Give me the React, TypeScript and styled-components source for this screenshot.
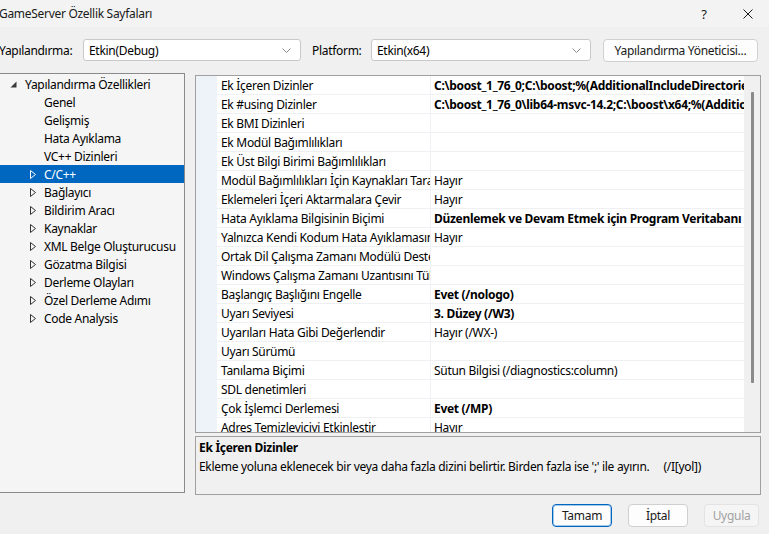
import React from "react";
import styled, { createGlobalStyle } from "styled-components";

const Global = createGlobalStyle`
  html, body { margin: 0; padding: 0; background: #f0f0f0; }
  * { box-sizing: border-box; }
`;

const FONT = `"Noto Sans", "Open Sans", sans-serif`;

const Window = styled.div`
  width: 769px;
  height: 534px;
  background: #f0f0f0;
  display: flex;
  flex-direction: column;
  overflow: hidden;
  font-family: ${FONT};
  font-size: 12px;
  letter-spacing: -0.3px;
  color: #000;
`;

const TitleBar = styled.div`
  height: 27px;
  flex: none;
  background: #f3f3f3;
  display: flex;
  align-items: center;
`;

const TitleText = styled.div`
  flex: 1;
  font-size: 12px;
  margin-left: -1px;
  color: #1a1a1a;
`;

const CaptionButton = styled.div<{ $w: number }>`
  width: ${(p) => p.$w}px;
  height: 27px;
  display: flex;
  align-items: center;
  justify-content: center;
  color: #1a1a1a;
  font-size: 13px;
`;

const ConfigRow = styled.div`
  display: flex;
  align-items: center;
  height: 22px;
  margin-top: 12px;
  margin-bottom: 12px;
`;

const Label = styled.div<{ $w: number; $ml: number }>`
  width: ${(p) => p.$w}px;
  margin-left: ${(p) => p.$ml}px;
  flex: none;
  white-space: nowrap;
`;

const Combo = styled.div<{ $w: number }>`
  width: ${(p) => p.$w}px;
  height: 22px;
  flex: none;
  background: #fff;
  border: 1px solid #c9c9c9;
  border-radius: 3px;
  display: flex;
  align-items: center;
  padding: 0 9px 0 5px;
`;

const ComboText = styled.div`
  flex: 1;
`;

const PushButton = styled.button<{ $w: number; $ml: number; $default?: boolean; $disabled?: boolean }>`
  width: ${(p) => p.$w}px;
  margin-left: ${(p) => p.$ml}px;
  height: 23px;
  flex: none;
  font-family: ${FONT};
  font-size: 12px;
  letter-spacing: -0.3px;
  padding: 0;
  border-radius: 4px;
  background: ${(p) => (p.$disabled ? "#f5f5f5" : "#fdfdfd")};
  color: ${(p) => (p.$disabled ? "#a2a2a2" : "#1a1a1a")};
  border: 1px solid ${(p) => (p.$default ? "#0067c0" : p.$disabled ? "#e3e3e3" : "#d0d0d0")};
  box-shadow: ${(p) => (p.$default ? "inset 0 0 0 1px rgba(0,103,192,0.35)" : "none")};
`;

const Main = styled.div`
  display: flex;
  height: 422px;
  flex: none;
`;

const TreePanel = styled.div`
  width: 186px;
  height: 420px;
  margin-left: -1px;
  flex: none;
  background: #f5f5f5;
  border: 1px solid #8a8a8a;
  padding-top: 1px;
  display: flex;
  flex-direction: column;
`;

const TreeItem = styled.div<{ $indent: number; $selected?: boolean }>`
  height: 18px;
  display: flex;
  align-items: center;
  padding-left: ${(p) => p.$indent}px;
  background: ${(p) => (p.$selected ? "#0067c0" : "transparent")};
  color: ${(p) => (p.$selected ? "#fff" : "#000")};
  white-space: nowrap;
`;

const Expander = styled.span<{ $w: number }>`
  width: ${(p) => p.$w}px;
  height: 18px;
  flex: none;
  display: flex;
  align-items: center;
`;

const RightColumn = styled.div`
  margin-left: 10px;
  width: 566px;
  display: flex;
  flex-direction: column;
  padding-top: 2px;
`;

const Grid = styled.div`
  height: 358px;
  border: 1px solid #a0a0a0;
  background: #fff;
  display: flex;
  overflow: hidden;
`;

const CategoryStripe = styled.div`
  width: 21px;
  flex: none;
  background: #eef2f9;
`;

const Rows = styled.div`
  width: 527px;
  flex: none;
  display: flex;
  flex-direction: column;
`;

const Row = styled.div`
  height: 19px;
  flex: none;
  display: flex;
  border-bottom: 1px solid #eef0f4;
`;

const NameCell = styled.div`
  width: 214px;
  flex: none;
  padding-left: 4px;
  overflow: hidden;
  white-space: nowrap;
  line-height: 19px;
  border-right: 1px solid #eef0f4;
`;

const ValueCell = styled.div<{ $bold?: boolean }>`
  flex: 1;
  min-width: 0;
  padding-left: 3px;
  overflow: hidden;
  white-space: nowrap;
  line-height: 19px;
  font-weight: ${(p) => (p.$bold ? 700 : 400)};
`;

const ScrollBar = styled.div`
  flex: 1;
  background: #f0f0f0;
  display: flex;
  justify-content: center;
  padding-top: 16px;
`;

const Thumb = styled.div`
  width: 3px;
  height: 291px;
  background: #8a8a8a;
  border-radius: 1px;
  margin-left: 1px;
`;

const Description = styled.div`
  margin-top: 3px;
  height: 59px;
  border: 1px solid #a0a0a0;
  background: #f0f0f0;
  padding: 2px 0 0 3px;
  display: flex;
  flex-direction: column;
  gap: 2px;
`;

const DescTitle = styled.div`
  font-weight: 700;
  line-height: 17px;
`;

const DescText = styled.div`
  line-height: 17px;
  white-space: pre;
`;

const Footer = styled.div`
  display: flex;
  justify-content: flex-end;
  padding-right: 10px;
  margin-top: 9px;
`;

const Chevron = () => (
  <svg width="9" height="5" viewBox="0 0 9 5">
    <path d="M0.5 0.5 L4.5 4.5 L8.5 0.5" fill="none" stroke="#8a8a8a" strokeWidth="1" />
  </svg>
);

const Collapsed = ({ color }: { color: string }) => (
  <svg width="6" height="9" viewBox="0 0 6 9">
    <path d="M0.5 0.5 L5.5 4.5 L0.5 8.5 Z" fill="none" stroke={color} strokeWidth="1" />
  </svg>
);

const Expanded = () => (
  <svg width="7" height="7" viewBox="0 0 7 7">
    <path d="M6.5 0.5 L6.5 6.5 L0.5 6.5 Z" fill="#3a3a3a" />
  </svg>
);

type TreeNode = { label: string; level: 0 | 1; expander: "none" | "open" | "closed"; selected?: boolean };

const tree: TreeNode[] = [
  { label: "Yapılandırma Özellikleri", level: 0, expander: "open" },
  { label: "Genel", level: 1, expander: "none" },
  { label: "Gelişmiş", level: 1, expander: "none" },
  { label: "Hata Ayıklama", level: 1, expander: "none" },
  { label: "VC++ Dizinleri", level: 1, expander: "none" },
  { label: "C/C++", level: 1, expander: "closed", selected: true },
  { label: "Bağlayıcı", level: 1, expander: "closed" },
  { label: "Bildirim Aracı", level: 1, expander: "closed" },
  { label: "Kaynaklar", level: 1, expander: "closed" },
  { label: "XML Belge Oluşturucusu", level: 1, expander: "closed" },
  { label: "Gözatma Bilgisi", level: 1, expander: "closed" },
  { label: "Derleme Olayları", level: 1, expander: "closed" },
  { label: "Özel Derleme Adımı", level: 1, expander: "closed" },
  { label: "Code Analysis", level: 1, expander: "closed" },
];

type Prop = { name: string; value?: string; bold?: boolean };

const props: Prop[] = [
  { name: "Ek İçeren Dizinler", value: "C:\\boost_1_76_0;C:\\boost;%(AdditionalIncludeDirectories)", bold: true },
  { name: "Ek #using Dizinler", value: "C:\\boost_1_76_0\\lib64-msvc-14.2;C:\\boost\\x64;%(AdditionalUsingDirectories)", bold: true },
  { name: "Ek BMI Dizinleri" },
  { name: "Ek Modül Bağımlılıkları" },
  { name: "Ek Üst Bilgi Birimi Bağımlılıkları" },
  { name: "Modül Bağımlılıkları İçin Kaynakları Tara", value: "Hayır" },
  { name: "Eklemeleri İçeri Aktarmalara Çevir", value: "Hayır" },
  { name: "Hata Ayıklama Bilgisinin Biçimi", value: "Düzenlemek ve Devam Etmek için Program Veritabanı (/ZI)", bold: true },
  { name: "Yalnızca Kendi Kodum Hata Ayıklamasını Destekle", value: "Hayır" },
  { name: "Ortak Dil Çalışma Zamanı Modülü Desteği" },
  { name: "Windows Çalışma Zamanı Uzantısını Tüket" },
  { name: "Başlangıç Başlığını Engelle", value: "Evet (/nologo)", bold: true },
  { name: "Uyarı Seviyesi", value: "3. Düzey (/W3)", bold: true },
  { name: "Uyarıları Hata Gibi Değerlendir", value: "Hayır (/WX-)" },
  { name: "Uyarı Sürümü" },
  { name: "Tanılama Biçimi", value: "Sütun Bilgisi (/diagnostics:column)" },
  { name: "SDL denetimleri" },
  { name: "Çok İşlemci Derlemesi", value: "Evet (/MP)", bold: true },
  { name: "Adres Temizleyiciyi Etkinleştir", value: "Hayır" },
];

export default function App() {
  return (
    <Window>
      <Global />
      <TitleBar>
        <TitleText>GameServer Özellik Sayfaları</TitleText>
        <CaptionButton $w={46}>?</CaptionButton>
        <CaptionButton $w={42}>
          <svg width="10" height="10" viewBox="0 0 10 10">
            <path d="M0.5 0.5 L9.5 9.5 M9.5 0.5 L0.5 9.5" stroke="#1a1a1a" strokeWidth="1" />
          </svg>
        </CaptionButton>
      </TitleBar>
      <ConfigRow>
        <Label $w={84} $ml={-1}>Yapılandırma:</Label>
        <Combo $w={218}>
          <ComboText>Etkin(Debug)</ComboText>
          <Chevron />
        </Combo>
        <Label $w={59} $ml={11}>Platform:</Label>
        <Combo $w={220}>
          <ComboText>Etkin(x64)</ComboText>
          <Chevron />
        </Combo>
        <PushButton $w={155} $ml={12}>Yapılandırma Yöneticisi...</PushButton>
      </ConfigRow>
      <Main>
        <TreePanel>
          {tree.map((n) => (
            <TreeItem key={n.label} $indent={n.level === 0 ? 10 : 30} $selected={n.selected}>
              <Expander $w={n.level === 0 ? 15 : 14}>
                {n.expander === "open" && <Expanded />}
                {n.expander === "closed" && <Collapsed color={n.selected ? "#fff" : "#333"} />}
              </Expander>
              {n.label}
            </TreeItem>
          ))}
        </TreePanel>
        <RightColumn>
          <Grid>
            <CategoryStripe />
            <Rows>
              {props.map((p) => (
                <Row key={p.name}>
                  <NameCell>{p.name}</NameCell>
                  <ValueCell $bold={p.bold}>{p.value ?? ""}</ValueCell>
                </Row>
              ))}
            </Rows>
            <ScrollBar>
              <Thumb />
            </ScrollBar>
          </Grid>
          <Description>
            <DescTitle>Ek İçeren Dizinler</DescTitle>
            <DescText>{"Ekleme yoluna eklenecek bir veya daha fazla dizini belirtir. Birden fazla ise ';' ile ayırın.     (/I[yol])"}</DescText>
          </Description>
        </RightColumn>
      </Main>
      <Footer>
        <PushButton $w={60} $ml={0} $default>Tamam</PushButton>
        <PushButton $w={60} $ml={16}>İptal</PushButton>
        <PushButton $w={55} $ml={16} $disabled>Uygula</PushButton>
      </Footer>
    </Window>
  );
}
